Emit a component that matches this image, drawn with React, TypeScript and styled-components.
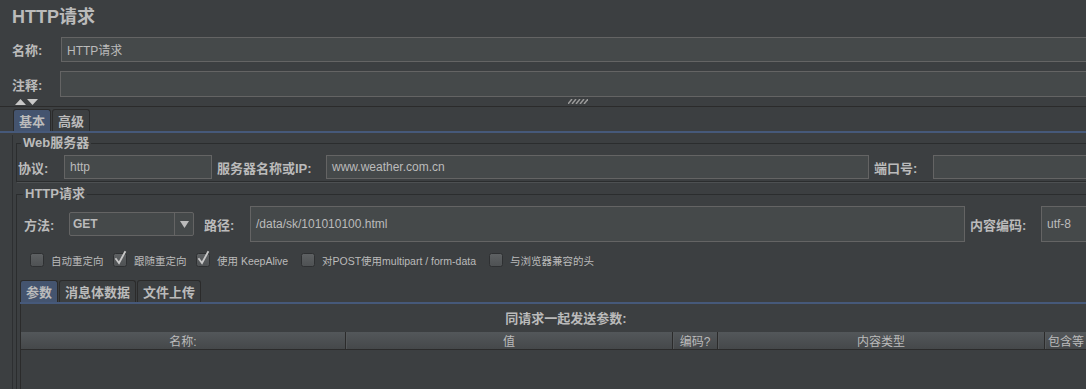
import React from "react";
import styled, { createGlobalStyle } from "styled-components";

const FONT = `"Liberation Sans", "Noto Sans CJK SC", sans-serif`;

const GlobalStyle = createGlobalStyle`
  html, body {
    margin: 0;
    padding: 0;
    background: #3c3f41;
    overflow: hidden;
  }
  body {
    font-family: ${FONT};
    color: #bbbbbb;
  }
`;

const Page = styled.div`
  width: 1160px;
  height: 389px;
  overflow: hidden;
  background: #3c3f41;
`;

const Title = styled.div`
  height: 28px;
  padding: 5px 0 0 12px;
  box-sizing: border-box;
  font-size: 18px;
  font-weight: bold;
  line-height: 24px;
  color: #bbbbbb;
`;

const FormRow = styled.div<{ $top: number; $height: number }>`
  display: flex;
  align-items: center;
  margin-top: ${(p) => p.$top}px;
  height: ${(p) => p.$height}px;
  padding-left: 12px;
`;

const Label = styled.div<{ $width: number }>`
  flex-shrink: 0;
  width: ${(p) => p.$width}px;
  font-size: 13px;
  font-weight: bold;
  white-space: nowrap;
  color: #bbbbbb;
`;

const TextField = styled.div<{ $width?: number; $height: number }>`
  box-sizing: border-box;
  flex: ${(p) => (p.$width ? "0 0 auto" : "1 1 auto")};
  width: ${(p) => (p.$width ? `${p.$width}px` : "auto")};
  height: ${(p) => p.$height}px;
  background: #45494a;
  border: 1px solid #646464;
  padding: 0 5px;
  display: flex;
  align-items: center;
  font-size: 12px;
  color: #bbbbbb;
  white-space: nowrap;
`;

const Splitter = styled.div`
  height: 9px;
  display: grid;
  grid-template-columns: 1fr auto 1fr;
  align-items: center;
  border-bottom: 1px solid #2b2b2b;
`;

const Arrows = styled.div`
  padding-left: 15px;
  display: flex;
  gap: 1px;
`;

const GripBox = styled.div`
  margin-right: 4px;
  display: flex;
`;

const TabStrip = styled.div<{ $left: number; $top: number }>`
  display: flex;
  gap: 1px;
  margin-top: ${(p) => p.$top}px;
  padding-left: ${(p) => p.$left}px;
  border-bottom: 2px solid #46597a;
`;

const Tab = styled.div<{ $active?: boolean }>`
  height: 22px;
  box-sizing: border-box;
  padding: 0 5px;
  display: flex;
  align-items: center;
  border: 1px solid #2b2b2b;
  border-bottom: none;
  border-radius: 3px 3px 0 0;
  background: ${(p) => (p.$active ? "#44546f" : "#3c3f41")};
  font-size: 13px;
  font-weight: bold;
  color: #bbbbbb;
`;

const TabBody = styled.div`
  margin-left: 12px;
  border-left: 1px solid #2d2f31;
  padding-left: 3px;
  height: 260px;
`;

const Group = styled.fieldset<{ $top: number; $padLeft: number }>`
  margin: ${(p) => p.$top}px 0 0;
  padding: 4px 2px 2px ${(p) => p.$padLeft}px;
  border: 1px solid #2b2d2e;
  box-shadow: 1px 1px 0 #4d5052;
  min-width: 0;
`;

const Legend = styled.legend`
  padding: 0 2px;
  margin-left: 3px;
  font-size: 13px;
  font-weight: bold;
  line-height: 16px;
  color: #bbbbbb;
`;

const GroupRow = styled.div<{ $height: number; $indent?: number }>`
  display: flex;
  align-items: center;
  height: ${(p) => p.$height}px;
  padding-left: ${(p) => p.$indent ?? 0}px;
`;

const Gap = styled.div<{ $w: number }>`
  flex-shrink: 0;
  width: ${(p) => p.$w}px;
`;

const Combo = styled.div`
  box-sizing: border-box;
  flex-shrink: 0;
  width: 125px;
  height: 24px;
  display: flex;
  background: #45494a;
  border: 1px solid #646464;
  border-radius: 2px;
`;

const ComboValue = styled.div`
  flex: 1;
  padding-left: 3px;
  display: flex;
  align-items: center;
  font-size: 12px;
  font-weight: bold;
  color: #bbbbbb;
`;

const ComboButton = styled.div`
  width: 18px;
  border-left: 1px solid #646464;
  display: flex;
  align-items: center;
  justify-content: center;
`;

const CheckRow = styled.div`
  display: flex;
  align-items: center;
  height: 20px;
  margin-top: 8px;
  padding-left: 10px;
`;

const CheckItem = styled.div<{ $width?: number }>`
  flex-shrink: 0;
  width: ${(p) => (p.$width ? `${p.$width}px` : "auto")};
  display: flex;
  align-items: center;
  gap: 7px;
  font-size: 10.5px;
  color: #bbbbbb;
  white-space: nowrap;
`;

const ParamsPanel = styled.div`
  width: 1090px;
  border-left: 1px solid #2b2b2b;
  height: 100px;
`;

const ParamsTitle = styled.div`
  padding-top: 7px;
  line-height: 16px;
  text-align: center;
  font-size: 13px;
  font-weight: bold;
  color: #bbbbbb;
`;

const HeaderRow = styled.div`
  margin-top: 5px;
  height: 17px;
  display: grid;
  grid-template-columns: 325px 327px 45px 327px 1fr;
  background: linear-gradient(#53575a, #45484a);
  border-bottom: 1px solid #2b2b2b;
`;

const HeaderCell = styled.div<{ $last?: boolean }>`
  display: flex;
  align-items: center;
  justify-content: ${(p) => (p.$last ? "flex-start" : "center")};
  padding-left: ${(p) => (p.$last ? "3px" : "0")};
  font-size: 12px;
  color: #bbbbbb;
  white-space: nowrap;
  overflow: hidden;
  border-right: ${(p) => (p.$last ? "none" : "1px solid #2b2b2b")};
  box-shadow: ${(p) => (p.$last ? "none" : "1px 0 0 #55585a")};
`;

const Triangle = ({ up }: { up?: boolean }) => (
  <svg width="11" height="6" viewBox="0 0 11 6">
    <polygon points={up ? "5.5,0 11,6 0,6" : "0,0 11,0 5.5,6"} fill="#c8c8c8" />
  </svg>
);

const Grip = () => (
  <svg width="20" height="5" viewBox="0 0 20 5">
    {[0, 4, 8, 12, 16].map((x) => (
      <line key={x} x1={x} y1={5} x2={x + 4} y2={0} stroke="#9a9a9a" strokeWidth="1.5" />
    ))}
  </svg>
);

const DownArrow = () => (
  <svg width="9" height="7" viewBox="0 0 9 7">
    <polygon points="0,0 9,0 4.5,7" fill="#bbbbbb" />
  </svg>
);

const CheckBox = ({ checked }: { checked?: boolean }) => (
  <svg width="14" height="14" viewBox="0 0 14 14" style={{ flexShrink: 0, overflow: "visible" }}>
    <defs>
      <linearGradient id="cbg" x1="0" y1="0" x2="0" y2="1">
        <stop offset="0" stopColor="#5e6163" />
        <stop offset="1" stopColor="#4e5153" />
      </linearGradient>
    </defs>
    <rect x="0.5" y="0.5" width="13" height="13" rx="2" fill="url(#cbg)" stroke="#2e3032" />
    {checked && (
      <polyline
        points="3,6 6,10 12,-1"
        fill="none"
        stroke="#c8c8c8"
        strokeWidth="1.8"
        strokeLinecap="square"
      />
    )}
  </svg>
);

export default function App() {
  return (
    <Page>
      <GlobalStyle />
      <Title>HTTP请求</Title>

      <FormRow $top={9} $height={25}>
        <Label $width={49}>名称:</Label>
        <TextField $height={25}>HTTP请求</TextField>
      </FormRow>
      <FormRow $top={9} $height={26}>
        <Label $width={48}>注释:</Label>
        <TextField $height={26} />
      </FormRow>

      <Splitter>
        <Arrows>
          <Triangle up />
          <Triangle />
        </Arrows>
        <GripBox>
          <Grip />
        </GripBox>
        <div />
      </Splitter>

      <TabStrip $left={13} $top={2}>
        <Tab $active>基本</Tab>
        <Tab>高级</Tab>
      </TabStrip>

      <TabBody>
        <Group $top={2} $padLeft={1}>
          <Legend>Web服务器</Legend>
          <GroupRow $height={24}>
            <Label $width={46}>协议:</Label>
            <TextField $width={148} $height={24}>http</TextField>
            <Gap $w={5} />
            <Label $width={109}>服务器名称或IP:</Label>
            <TextField $width={543} $height={24}>www.weather.com.cn</TextField>
            <Gap $w={5} />
            <Label $width={59}>端口号:</Label>
            <TextField $width={220} $height={24} />
          </GroupRow>
        </Group>

        <Group $top={4} $padLeft={3}>
          <Legend>HTTP请求</Legend>
          <GroupRow $height={36} $indent={4}>
            <Label $width={45}>方法:</Label>
            <Combo>
              <ComboValue>GET</ComboValue>
              <ComboButton>
                <DownArrow />
              </ComboButton>
            </Combo>
            <Gap $w={10} />
            <Label $width={46}>路径:</Label>
            <TextField $width={715} $height={36}>/data/sk/101010100.html</TextField>
            <Gap $w={5} />
            <Label $width={71}>内容编码:</Label>
            <TextField $width={120} $height={36}>utf-8</TextField>
          </GroupRow>

          <CheckRow>
            <CheckItem $width={83}>
              <CheckBox />
              自动重定向
            </CheckItem>
            <CheckItem $width={83}>
              <CheckBox checked />
              跟随重定向
            </CheckItem>
            <CheckItem $width={105}>
              <CheckBox checked />
              使用 KeepAlive
            </CheckItem>
            <CheckItem $width={188}>
              <CheckBox />
              对POST使用multipart / form-data
            </CheckItem>
            <CheckItem>
              <CheckBox />
              与浏览器兼容的头
            </CheckItem>
          </CheckRow>

          <TabStrip $left={0} $top={10}>
            <Tab $active>参数</Tab>
            <Tab>消息体数据</Tab>
            <Tab>文件上传</Tab>
          </TabStrip>

          <ParamsPanel>
            <ParamsTitle>同请求一起发送参数:</ParamsTitle>
            <HeaderRow>
              <HeaderCell>名称:</HeaderCell>
              <HeaderCell>值</HeaderCell>
              <HeaderCell>编码?</HeaderCell>
              <HeaderCell>内容类型</HeaderCell>
              <HeaderCell $last>包含等</HeaderCell>
            </HeaderRow>
          </ParamsPanel>
        </Group>
      </TabBody>
    </Page>
  );
}
